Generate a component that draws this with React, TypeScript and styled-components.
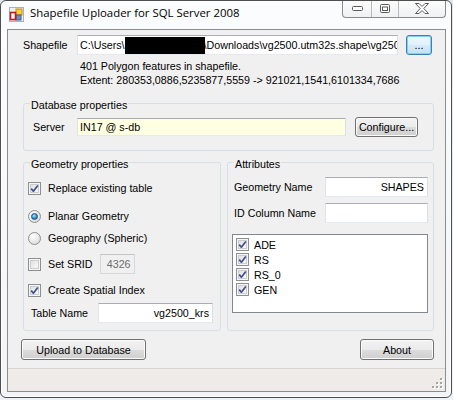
import styled, { createGlobalStyle } from "styled-components";

const GlobalStyle = createGlobalStyle`
	html, body {
		margin: 0;
		padding: 0;
	}
	body {
		width: 453px;
		height: 400px;
		overflow: hidden;
		background: linear-gradient(180deg, #dfe7ef 0%, #eef3f8 100%);
		font-family: "Liberation Sans", Arial, sans-serif;
		font-size: 10.7px;
		color: #000;
	}
`

const Window = styled.div`
	box-sizing: border-box;
	width: 452px;
	height: 398px;
	border: 1px solid #4e4e4e;
	border-radius: 6px;
	background: linear-gradient(180deg, #fbfcfd 0%, #f3f4f6 100%);
	box-shadow: inset 0 0 0 1px #ffffff;
	display: flex;
	flex-direction: column;
	overflow: hidden;
`

const TitleBar = styled.div`
	height: 28px;
	flex-shrink: 0;
	display: flex;
	align-items: flex-start;
	padding: 0 5px 0 8px;
`

const AppIcon = styled.svg`
	margin-top: 6px;
	flex-shrink: 0;
`

const Title = styled.span`
	margin: 4px 0 0 6px;
	font-family: "Open Sans", "Noto Sans", sans-serif;
	font-size: 11.4px;
	line-height: 16px;
	color: #000;
`

const Caption = styled.div`
	margin-left: auto;
	margin-top: -1px;
	display: flex;
	height: 18px;
	box-sizing: border-box;
	border: 1px solid #8a8a8a;
	border-top: none;
	border-radius: 0 0 4px 4px;
	background: linear-gradient(180deg, #fdfdfd 0%, #eff1f3 100%);
	overflow: hidden;
`

const CaptionButton = styled.div<{ $width: number }>`
	width: ${p => p.$width}px;
	display: flex;
	align-items: center;
	justify-content: center;
	& + & {
		border-left: 1px solid #b7b9bc;
	}
`

const Client = styled.div`
	flex: 1;
	margin: 0 5px 5px 6px;
	border: 1px solid #8d8d8d;
	background: #f0f0f0;
	display: flex;
	flex-direction: column;
`

const Content = styled.div`
	flex: 1;
	display: flex;
	flex-direction: column;
	padding: 0 11px 0 13px;
`

const Row = styled.div<{ $top: number; $indent?: number; $height?: number }>`
	display: flex;
	align-items: center;
	height: ${p => p.$height ?? 20}px;
	margin-top: ${p => p.$top}px;
	padding-left: ${p => p.$indent ?? 0}px;
	flex-shrink: 0;
`

const FieldLabel = styled.span<{ $width: number; $indent?: number }>`
	box-sizing: border-box;
	width: ${p => p.$width}px;
	padding-left: ${p => p.$indent ?? 0}px;
	flex-shrink: 0;
	white-space: nowrap;
`

const TextBox = styled.div<{ $width: number; $height?: number; $align?: string; $bg?: string; $disabled?: boolean; $gap?: number }>`
	box-sizing: border-box;
	width: ${p => p.$width}px;
	height: ${p => p.$height ?? 20}px;
	margin-left: ${p => p.$gap ?? 0}px;
	flex-shrink: 0;
	display: flex;
	align-items: center;
	justify-content: ${p => p.$align === "right" ? "flex-end" : "flex-start"};
	padding: 0 3px 0 2px;
	background: ${p => p.$bg ?? "#ffffff"};
	border: 1px solid;
	border-color: ${p => p.$disabled ? "#c2c4c8 #d6d8db #d6d8db #d6d8db" : "#abadb3 #dbdfe6 #e3e9ef #e2e3ea"};
	color: ${p => p.$disabled ? "#6d6d6d" : "#000"};
	white-space: nowrap;
	overflow: hidden;
`

const Redacted = styled.span`
	display: inline-block;
	width: 80px;
	height: 17px;
	margin-right: -1px;
	background: #000;
	flex-shrink: 0;
`

const Button = styled.button<{ $width: number; $height?: number; $default?: boolean; $gap?: number }>`
	box-sizing: border-box;
	width: ${p => p.$width}px;
	height: ${p => p.$height ?? 21}px;
	flex-shrink: 0;
	margin: 0 0 0 ${p => p.$gap ?? 0}px;
	padding: 0;
	font-family: "Liberation Sans", Arial, sans-serif;
	font-size: 10.7px;
	color: #000;
	border: 1px solid ${p => p.$default ? "#3c7fb1" : "#707070"};
	border-radius: 3px;
	background: ${p => p.$default
		? "linear-gradient(180deg, #eef7fd 0%, #e3f1fb 50%, #d4eaf9 50%, #c6e2f6 100%)"
		: "linear-gradient(180deg, #f2f2f2 0%, #ebebeb 50%, #dddddd 50%, #cfcfcf 100%)"};
	box-shadow: inset 0 0 0 1px ${p => p.$default ? "#7fd0f7" : "#fbfbfb"};
`

const Info = styled.div`
	margin-top: 4px;
	padding-left: 59px;
	line-height: 14px;
	white-space: nowrap;
`

const GroupBox = styled.div<{ $width?: number; $top: number; $height?: number }>`
	box-sizing: border-box;
	margin-top: ${p => p.$top}px;
	${p => p.$width ? `width: ${p.$width}px; flex-shrink: 0;` : "flex: 1;"}
	${p => p.$height ? `height: ${p.$height}px;` : ""}
	border: 1px solid #d5dfe5;
	border-radius: 3px;
	display: flex;
	flex-direction: column;
`

const GroupTitle = styled.div`
	align-self: flex-start;
	margin: -5px 0 0 6px;
	padding: 0 1px;
	line-height: 13px;
	background: #f0f0f0;
	white-space: nowrap;
`

const GroupBody = styled.div<{ $left: number; $right?: number; $bottom?: number }>`
	display: flex;
	flex-direction: column;
	padding: 0 ${p => p.$right ?? 0}px ${p => p.$bottom ?? 0}px ${p => p.$left}px;
`

const GroupsRow = styled.div`
	display: flex;
	gap: 6px;
	margin-left: 2px;
	flex-shrink: 0;
`

const CheckBox = styled.span`
	box-sizing: border-box;
	width: 13px;
	height: 13px;
	flex-shrink: 0;
	border: 1px solid #8e8f8f;
	background: linear-gradient(135deg, #d9dadb 0%, #f1f1f1 60%, #fdfdfd 100%);
	box-shadow: inset 0 0 0 1px #f6f6f6, inset 0 0 0 2px #c9ccd1;
	display: flex;
	align-items: center;
	justify-content: center;
`

const Radio = styled.span<{ $checked?: boolean }>`
	box-sizing: border-box;
	width: 13px;
	height: 13px;
	flex-shrink: 0;
	border-radius: 50%;
	border: 1px solid #8e8f8f;
	background: radial-gradient(circle at 35% 30%, #ffffff 0%, #e9e9e9 55%, #cfcfcf 100%);
	display: flex;
	align-items: center;
	justify-content: center;
	&::after {
		content: "";
		display: ${p => p.$checked ? "block" : "none"};
		width: 7px;
		height: 7px;
		border-radius: 50%;
		box-sizing: border-box;
		border: 1px solid #1d4f7e;
		background: radial-gradient(circle at 40% 35%, #b8ecff 0%, #3a9ee3 45%, #0d5597 100%);
	}
`

const OptionText = styled.span<{ $gap?: number }>`
	margin-left: ${p => p.$gap ?? 7}px;
	white-space: nowrap;
`

const ListBox = styled.div`
	box-sizing: border-box;
	margin-top: 11px;
	width: 196px;
	height: 79px;
	border: 1px solid #828790;
	background: #ffffff;
	padding: 2px 0 0 3px;
	flex-shrink: 0;
`

const ListItem = styled.div`
	display: flex;
	align-items: center;
	height: 15px;
`

const ButtonRow = styled.div`
	display: flex;
	justify-content: space-between;
	margin-top: 8px;
	flex-shrink: 0;
`

const StatusStrip = styled.div`
	margin-top: auto;
	height: 20px;
	border-top: 1px solid #d6d3d0;
	background: #eeebe9;
	display: flex;
	justify-content: flex-end;
	align-items: flex-end;
	padding: 0 2px 2px 0;
	flex-shrink: 0;
`

const Check = () => (
	<svg width="9" height="9" viewBox="0 0 9 9">
		<path d="M1.2 4.6 L3.4 7.2 L7.8 1.4" fill="none" stroke="#3d4f8f" strokeWidth="1.7" strokeLinejoin="round" />
	</svg>
)

const CheckOption = ({ checked, label, top }: { checked: boolean; label: string; top: number }) => (
	<Row $top={top} $height={16}>
		<CheckBox>{checked && <Check />}</CheckBox>
		<OptionText>{label}</OptionText>
	</Row>
)

const RadioOption = ({ checked, label, top }: { checked: boolean; label: string; top: number }) => (
	<Row $top={top} $height={16}>
		<Radio $checked={checked} />
		<OptionText>{label}</OptionText>
	</Row>
)

const attributes = ["ADE", "RS", "RS_0", "GEN"]

export default function App() {
	return (
		<>
			<GlobalStyle />
			<Window>
				<TitleBar>
					<AppIcon width="15" height="15" viewBox="0 0 15 15">
						<rect x="0.5" y="0.5" width="14" height="14" fill="#eef0f3" stroke="#a9b1bb" />
						<rect x="7" y="2" width="6" height="6" fill="#f7d13a" stroke="#d08a10" />
						<rect x="7" y="8" width="5" height="5" fill="#6d8fc4" stroke="#3e5f96" />
						<rect x="1.5" y="5.5" width="5" height="7" fill="#ffffff" stroke="#c5161d" strokeWidth="1.6" />
					</AppIcon>
					<Title>Shapefile Uploader for SQL Server 2008</Title>
					<Caption>
						<CaptionButton $width={28}>
							<svg width="11" height="5" viewBox="0 0 11 5">
								<rect x="0.5" y="0.5" width="10" height="4" rx="1" fill="#fff" stroke="#5a5a5a" />
							</svg>
						</CaptionButton>
						<CaptionButton $width={26}>
							<svg width="10" height="9" viewBox="0 0 10 9">
								<rect x="0.5" y="0.5" width="9" height="8" rx="1" fill="#fff" stroke="#5a5a5a" />
								<rect x="2.5" y="3" width="5" height="3.5" fill="none" stroke="#5a5a5a" />
							</svg>
						</CaptionButton>
						<CaptionButton $width={46}>
							<svg width="14" height="11" viewBox="0 0 14 11">
								<polygon points="0.5,0.5 4,0.5 7,3.5 10,0.5 13.5,0.5 8.8,5.5 13.5,10.5 10,10.5 7,7.5 4,10.5 0.5,10.5 5.2,5.5" fill="#fff" stroke="#5a5a5a" strokeLinejoin="round" />
							</svg>
						</CaptionButton>
					</Caption>
				</TitleBar>
				<Client>
					<Content>
						<Row $top={5}>
							<FieldLabel $width={56} $indent={2}>Shapefile</FieldLabel>
							<TextBox $width={321}>
								C:\Users\<Redacted />\Downloads\vg2500.utm32s.shape\vg250
							</TextBox>
							<Button $width={26} $height={20} $default $gap={8}>...</Button>
						</Row>
						<Info>
							401 Polygon features in shapefile.<br />
							Extent: 280353,0886,5235877,5559 -&gt; 921021,1541,6101334,7686
						</Info>
						<GroupsRow>
							<GroupBox $top={16}>
								<GroupTitle>Database properties</GroupTitle>
								<GroupBody $left={9} $bottom={13}>
									<Row $top={5}>
										<FieldLabel $width={44}>Server</FieldLabel>
										<TextBox $width={269} $height={18} $bg="#ffffe1">IN17 @ s-db</TextBox>
										<Button $width={63} $height={20} $gap={9}>Configure...</Button>
									</Row>
								</GroupBody>
							</GroupBox>
						</GroupsRow>
						<GroupsRow>
							<GroupBox $width={198} $top={11} $height={169}>
								<GroupTitle>Geometry properties</GroupTitle>
								<GroupBody $left={4}>
									<CheckOption top={9} checked label="Replace existing table" />
									<RadioOption top={12} checked label="Planar Geometry" />
									<RadioOption top={6} checked={false} label="Geography (Spheric)" />
									<Row $top={8}>
										<CheckBox />
										<OptionText>Set SRID</OptionText>
										<TextBox $width={35} $align="right" $bg="#f0f0f0" $disabled $gap={7}>4326</TextBox>
									</Row>
									<CheckOption top={8} checked label="Create Spatial Index" />
									<Row $top={5}>
										<FieldLabel $width={70} $indent={3}>Table Name</FieldLabel>
										<TextBox $width={115} $align="right">vg2500_krs</TextBox>
									</Row>
								</GroupBody>
							</GroupBox>
							<GroupBox $top={11} $height={169}>
								<GroupTitle>Attributes</GroupTitle>
								<GroupBody $left={4} $right={5}>
									<Row $top={6}>
										<FieldLabel $width={93} $indent={2}>Geometry Name</FieldLabel>
										<TextBox $width={103} $align="right">SHAPES</TextBox>
									</Row>
									<Row $top={6}>
										<FieldLabel $width={93} $indent={2}>ID Column Name</FieldLabel>
										<TextBox $width={103} />
									</Row>
									<ListBox>
										{attributes.map(name => (
											<ListItem key={name}>
												<CheckBox><Check /></CheckBox>
												<OptionText $gap={5}>{name}</OptionText>
											</ListItem>
										))}
									</ListBox>
								</GroupBody>
							</GroupBox>
						</GroupsRow>
						<ButtonRow>
							<Button $width={125}>Upload to Database</Button>
							<Button $width={74}>About</Button>
						</ButtonRow>
					</Content>
					<StatusStrip>
						<svg width="11" height="11" viewBox="0 0 11 11">
							{[[8, 0], [4, 4], [8, 4], [0, 8], [4, 8], [8, 8]].map(([x, y]) => (
								<g key={`${x}-${y}`}>
									<rect x={x + 1} y={y + 1} width="2" height="2" fill="#ffffff" />
									<rect x={x} y={y} width="2" height="2" fill="#a7a5a2" />
								</g>
							))}
						</svg>
					</StatusStrip>
				</Client>
			</Window>
		</>
	)
}
